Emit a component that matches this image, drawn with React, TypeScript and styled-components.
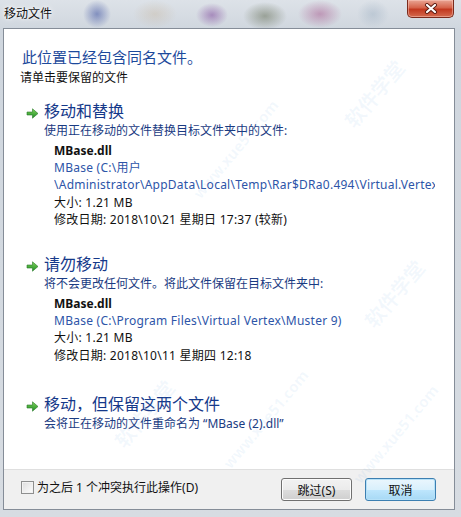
import React, { FunctionComponent, ReactNode } from 'react';
import styled, { createGlobalStyle } from 'styled-components';

const GlobalStyle = createGlobalStyle`
	html, body {
		margin: 0;
		padding: 0;
		overflow: hidden;
	}
`;

const Window = styled.div`
	width: 461px;
	height: 517px;
	display: flex;
	flex-direction: column;
	font-family: 'Noto Sans', 'Noto Sans CJK SC', sans-serif;
	font-size: 12px;
	background:
		radial-gradient(ellipse 14px 14px at 97px 14px, rgba(60, 80, 160, 0.55), transparent),
		radial-gradient(ellipse 22px 14px at 155px 14px, rgba(190, 160, 120, 0.25), transparent),
		radial-gradient(ellipse 16px 12px at 212px 15px, rgba(120, 60, 150, 0.5), transparent),
		radial-gradient(ellipse 22px 14px at 265px 16px, rgba(80, 90, 60, 0.45), transparent),
		radial-gradient(ellipse 22px 14px at 320px 14px, rgba(160, 70, 130, 0.45), transparent),
		radial-gradient(ellipse 16px 14px at 373px 14px, rgba(150, 170, 190, 0.4), transparent),
		linear-gradient(180deg, #dde2e8 0px, #cfd6de 30px, #d7dce2 100%);
`;

const TitleBar = styled.div`
	height: 28px;
	display: flex;
	justify-content: space-between;
	align-items: flex-start;
	flex-shrink: 0;
`;

const Title = styled.span`
	margin: 5px 0 0 4px;
	font-size: 12px;
	line-height: 17px;
	color: #111;
	text-shadow: 0 0 6px #fff, 0 0 3px #fff;
`;

const CloseButton = styled.div`
	width: 45px;
	height: 17px;
	margin-right: 7px;
	display: flex;
	align-items: center;
	justify-content: center;
	border: 1px solid #7b2a1c;
	border-top: none;
	border-radius: 0 0 5px 5px;
	background: linear-gradient(180deg, #e9a594 0%, #d5634a 45%, #c2381f 55%, #d46a4e 100%);
	box-shadow: inset 0 0 0 1px rgba(255, 210, 200, 0.45);
`;

const Client = styled.div`
	position: relative;
	margin: 0 6px 7px 3px;
	flex: 1;
	display: flex;
	flex-direction: column;
	background: #fff;
	border: 1px solid #858d98;
	overflow: hidden;
`;

const Content = styled.div`
	flex: 1;
	padding: 18px 0 0 0;
`;

const Heading = styled.div`
	margin-left: 18px;
	font-size: 15px;
	line-height: 20px;
	color: #1d4a9c;
`;

const Sub = styled.div`
	margin: 2px 0 0 16px;
	line-height: 17px;
	color: #111;
`;

const Option = styled.div<{ $gap: number }>`
	margin-top: ${(p) => p.$gap}px;
	display: grid;
	grid-template-columns: 40px 1fr;
`;

const ArrowCell = styled.div`
	padding: 6px 0 0 22px;
`;

const OptionBody = styled.div`
	min-width: 0;
`;

const OptionTitle = styled.div`
	font-size: 16px;
	line-height: 22px;
	color: #15398a;
`;

const OptionDesc = styled.div`
	line-height: 17px;
	color: #1a3b82;
`;

const Info = styled.div`
	margin: 3px 0 0 10px;
	width: 381px;
	overflow: hidden;
`;

const InfoLine = styled.div<{ $kind?: 'name' | 'path' }>`
	line-height: 17.2px;
	white-space: nowrap;
	overflow: hidden;
	letter-spacing: ${(p) => (p.$kind === 'name' ? 0 : 0.25)}px;
	color: ${(p) => (p.$kind === 'path' ? '#2d55a8' : '#111')};
	font-weight: ${(p) => (p.$kind === 'name' ? 700 : 400)};
`;

const Footer = styled.div`
	height: 39px;
	flex-shrink: 0;
	display: flex;
	align-items: center;
	padding: 0 18px 0 17px;
	background: #f0f0f0;
	border-top: 1px solid #dfdfdf;
`;

const CheckLabel = styled.label`
	display: flex;
	align-items: center;
	gap: 3px;
	flex: 1;
	color: #111;
	line-height: 17px;
	margin-top: -4px;
`;

const CheckBox = styled.span`
	width: 11px;
	height: 11px;
	border: 1px solid #8e8f8f;
	background: linear-gradient(135deg, #dcdcdc 0%, #f4f4f4 70%, #fff 100%);
	box-shadow: inset 0 0 0 1px #f2f2f2;
`;

const Button = styled.div<{ $focus?: boolean }>`
	width: 69px;
	height: 21px;
	margin-left: 13px;
	display: flex;
	align-items: center;
	justify-content: center;
	border: 1px solid ${(p) => (p.$focus ? '#3c7fb1' : '#707070')};
	border-radius: 3px;
	color: #111;
	background: ${(p) =>
		p.$focus
			? 'linear-gradient(180deg, #eaf6fd 0%, #d9f0fc 50%, #bee6fd 51%, #a7d9f5 100%)'
			: 'linear-gradient(180deg, #f2f2f2 0%, #ebebeb 50%, #dddddd 51%, #cfcfcf 100%)'};
	box-shadow: inset 0 0 0 1px ${(p) => (p.$focus ? '#b6e1f8' : '#fcfcfc')};
`;

const Watermark = styled.span<{ $x: number; $y: number; $size: number }>`
	position: absolute;
	left: ${(p) => p.$x}px;
	top: ${(p) => p.$y}px;
	font-size: ${(p) => p.$size}px;
	font-weight: 700;
	color: rgba(120, 175, 225, 0.09);
	transform: rotate(-50deg);
	white-space: nowrap;
	pointer-events: none;
`;

const GreenArrow: FunctionComponent = () => (
	<svg width="13" height="11" viewBox="0 0 13 11">
		<defs>
			<linearGradient id="ga" x1="0" y1="0" x2="0" y2="1">
				<stop offset="0" stopColor="#7fd35a" />
				<stop offset="1" stopColor="#1f8c26" />
			</linearGradient>
		</defs>
		<path d="M1 4 H6.5 V0.8 L12 5.5 L6.5 10.2 V7 H1 Z" fill="url(#ga)" stroke="#2a7a2a" strokeWidth="0.6" />
	</svg>
);

const CloseGlyph: FunctionComponent = () => (
	<svg width="14" height="11" viewBox="0 0 14 11">
		<path d="M3 2 L11 9 M11 2 L3 9" stroke="#5a1a10" strokeWidth="4" strokeLinecap="round" />
		<path d="M3 2 L11 9 M11 2 L3 9" stroke="#fff" strokeWidth="2.2" strokeLinecap="round" />
	</svg>
);

interface ChoiceProps {
	gap: number;
	title: string;
	desc: string;
	children?: ReactNode;
}

const Choice: FunctionComponent<ChoiceProps> = ({ gap, title, desc, children }) => (
	<Option $gap={gap}>
		<ArrowCell>
			<GreenArrow />
		</ArrowCell>
		<OptionBody>
			<OptionTitle>{title}</OptionTitle>
			<OptionDesc>{desc}</OptionDesc>
			{children}
		</OptionBody>
	</Option>
);

const App: FunctionComponent = () => (
	<Window>
		<GlobalStyle />
		<TitleBar>
			<Title>移动文件</Title>
			<CloseButton>
				<CloseGlyph />
			</CloseButton>
		</TitleBar>
		<Client>
			<Watermark $x={330} $y={50} $size={20}>软件学堂</Watermark>
			<Watermark $x={170} $y={110} $size={15}>www.xue51.com</Watermark>
			<Watermark $x={350} $y={250} $size={20}>软件学堂</Watermark>
			<Watermark $x={330} $y={395} $size={15}>www.xue51.com</Watermark>
			<Watermark $x={100} $y={370} $size={20}>软件学堂</Watermark>
			<Watermark $x={200} $y={380} $size={15}>www.xue51.com</Watermark>
			<Content>
				<Heading>此位置已经包含同名文件。</Heading>
				<Sub>请单击要保留的文件</Sub>
				<Choice gap={14} title="移动和替换" desc="使用正在移动的文件替换目标文件夹中的文件:">
					<Info>
						<InfoLine $kind="name">MBase.dll</InfoLine>
						<InfoLine $kind="path">{'MBase (C:\\用户'}</InfoLine>
						<InfoLine $kind="path">{'\\Administrator\\AppData\\Local\\Temp\\Rar$DRa0.494\\Virtual.Vertex\\Muster 9)'}</InfoLine>
						<InfoLine>大小: 1.21 MB</InfoLine>
						<InfoLine>{'修改日期: 2018\\10\\21 星期日 17:37 (较新)'}</InfoLine>
					</Info>
				</Choice>
				<Choice gap={25} title="请勿移动" desc="将不会更改任何文件。将此文件保留在目标文件夹中:">
					<Info>
						<InfoLine $kind="name">MBase.dll</InfoLine>
						<InfoLine $kind="path">{'MBase (C:\\Program Files\\Virtual Vertex\\Muster 9)'}</InfoLine>
						<InfoLine>大小: 1.21 MB</InfoLine>
						<InfoLine>{'修改日期: 2018\\10\\11 星期四 12:18'}</InfoLine>
					</Info>
				</Choice>
				<Choice gap={29} title="移动，但保留这两个文件" desc="会将正在移动的文件重命名为 “MBase (2).dll”" />
			</Content>
			<Footer>
				<CheckLabel>
					<CheckBox />
					为之后 1 个冲突执行此操作(D)
				</CheckLabel>
				<Button>跳过(S)</Button>
				<Button $focus>取消</Button>
			</Footer>
		</Client>
	</Window>
);

export default App;
